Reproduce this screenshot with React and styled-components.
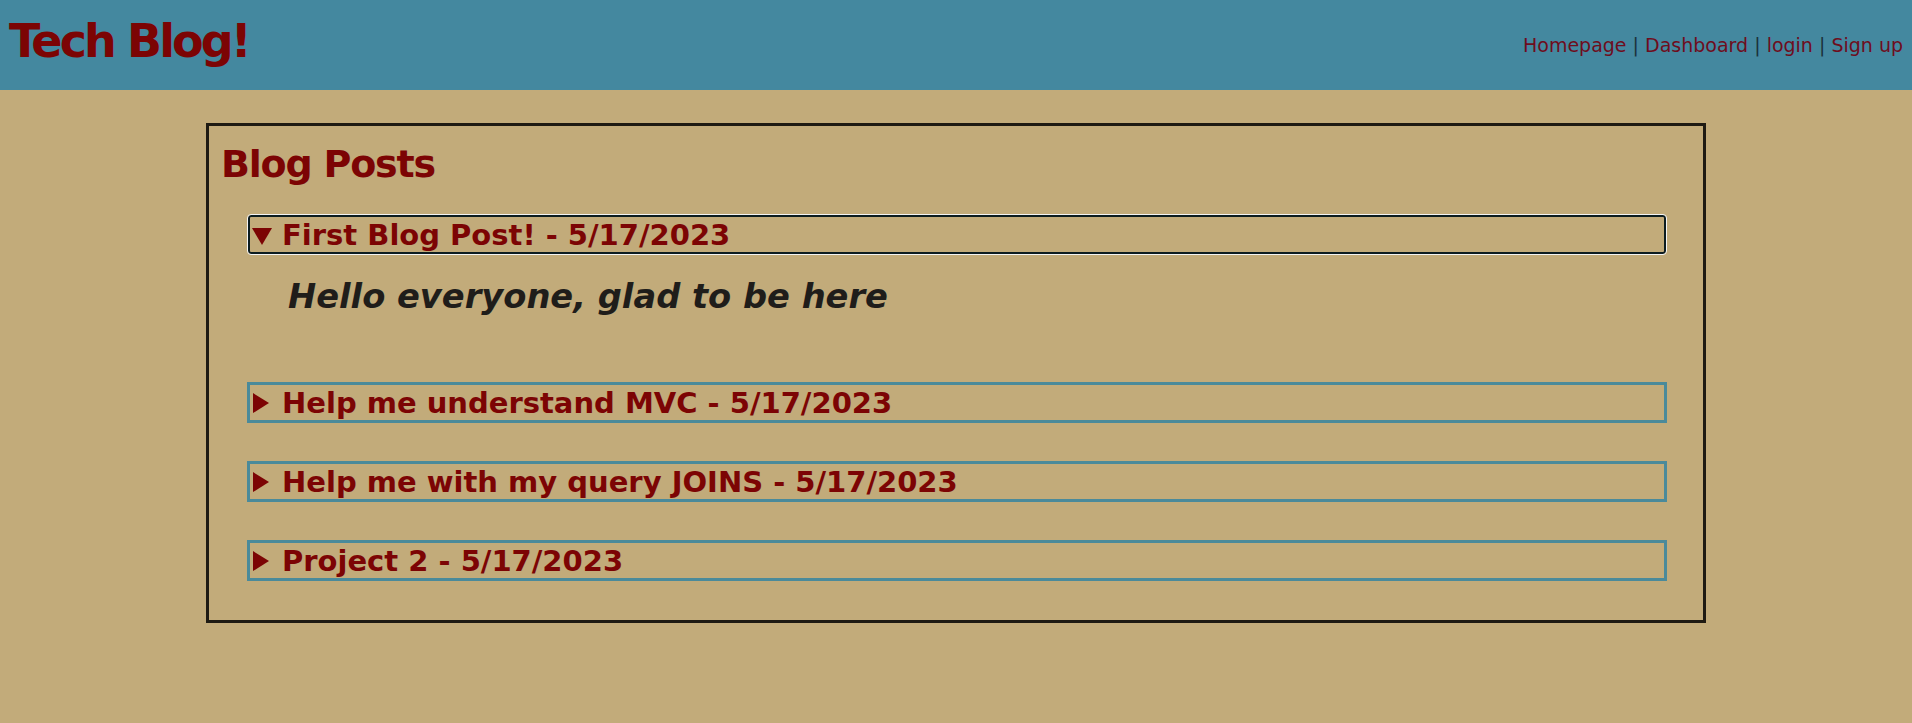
import React from "react";
import styled, { createGlobalStyle } from "styled-components";

const GlobalStyle = createGlobalStyle`
  html, body {
    margin: 0;
    padding: 0;
    background: #c2ab7a;
    font-family: "DejaVu Sans", "Liberation Sans", sans-serif;
  }
  #root {
    min-height: 723px;
    background: #c2ab7a;
  }
`;

const Header = styled.header`
  display: flex;
  justify-content: space-between;
  align-items: flex-start;
  height: 90px;
  padding: 0 9px 0 9px;
  box-sizing: border-box;
  background: #44889f;
`;

const Title = styled.h1`
  margin: 18px 0 0 0;
  font-size: 46px;
  line-height: 46px;
  font-weight: bold;
  letter-spacing: -2.9px;
  color: #7c0404;
`;

const Nav = styled.nav`
  margin-top: 36px;
  font-size: 19px;
  line-height: 19px;
  color: #1b323c;
  white-space: pre;
`;

const NavLink = styled.a`
  color: #6e0d1d;
  text-decoration: none;
`;

const Main = styled.main`
  padding: 33px 0 40px;
`;

const Board = styled.section`
  box-sizing: border-box;
  width: 1500px;
  margin: 0 auto;
  border: 3px solid #1e1a12;
  padding: 19px 0 39px;
`;

const Heading = styled.h2`
  margin: 0 0 31px 12px;
  font-size: 38px;
  line-height: 38px;
  font-weight: bold;
  letter-spacing: -1.2px;
  color: #7c0404;
`;

const PostList = styled.div`
  display: flex;
  flex-direction: column;
  gap: 38px;
  width: 1420px;
  margin: 0 0 0 38px;
`;

const Post = styled.details`
  margin: 0;
`;

const Summary = styled.summary`
  display: flex;
  align-items: center;
  list-style: none;
  height: 41px;
  box-sizing: border-box;
  border: ${(p) => (p.$focused ? "1px solid #f4f4f4" : "3px solid #4a8a9a")};
  border-radius: ${(p) => (p.$focused ? "4px" : "0")};
  box-shadow: ${(p) => (p.$focused ? "inset 0 0 0 2px #0c1c20" : "none")};
  padding-left: ${(p) => (p.$focused ? "4px" : "2px")};
  font-size: 29px;
  line-height: 35px;
  font-weight: bold;
  color: #7c0404;
  cursor: pointer;
  &::-webkit-details-marker {
    display: none;
  }
`;

const Marker = styled.svg`
  flex: none;
  width: 20px;
  height: 20px;
  margin: 0 10px 0 0;
`;

const SummaryText = styled.span`
  display: block;
  padding-top: 1px;
`;

const Body = styled.p`
  margin: 22px 0 27px 41px;
  font-size: 33.7px;
  line-height: 40px;
  font-style: italic;
  font-weight: bold;
  color: #1f1d1a;
`;

const posts = [
  {
    title: "First Blog Post! - 5/17/2023",
    body: "Hello everyone, glad to be here",
    open: true,
  },
  { title: "Help me understand MVC - 5/17/2023" },
  { title: "Help me with my query JOINS - 5/17/2023" },
  { title: "Project 2 - 5/17/2023" },
];

function Triangle({ open }) {
  return (
    <Marker viewBox="0 0 20 20" aria-hidden="true">
      {open ? (
        <polygon points="0,3 20,3 10,20" fill="#7c0404" />
      ) : (
        <polygon points="1,0 17,10 1,20" fill="#7c0404" />
      )}
    </Marker>
  );
}

export default function App() {
  return (
    <>
      <GlobalStyle />
      <Header>
        <Title>Tech Blog!</Title>
        <Nav>
          <NavLink href="#">Homepage</NavLink>
          {" | "}
          <NavLink href="#">Dashboard</NavLink>
          {" | "}
          <NavLink href="#">login</NavLink>
          {" | "}
          <NavLink href="#">Sign up</NavLink>
        </Nav>
      </Header>
      <Main>
        <Board>
          <Heading>Blog Posts</Heading>
          <PostList>
            {posts.map((post) => (
              <Post key={post.title} open={post.open}>
                <Summary $focused={post.open}>
                  <Triangle open={post.open} />
                  <SummaryText>{post.title}</SummaryText>
                </Summary>
                {post.body && <Body>{post.body}</Body>}
              </Post>
            ))}
          </PostList>
        </Board>
      </Main>
    </>
  );
}
